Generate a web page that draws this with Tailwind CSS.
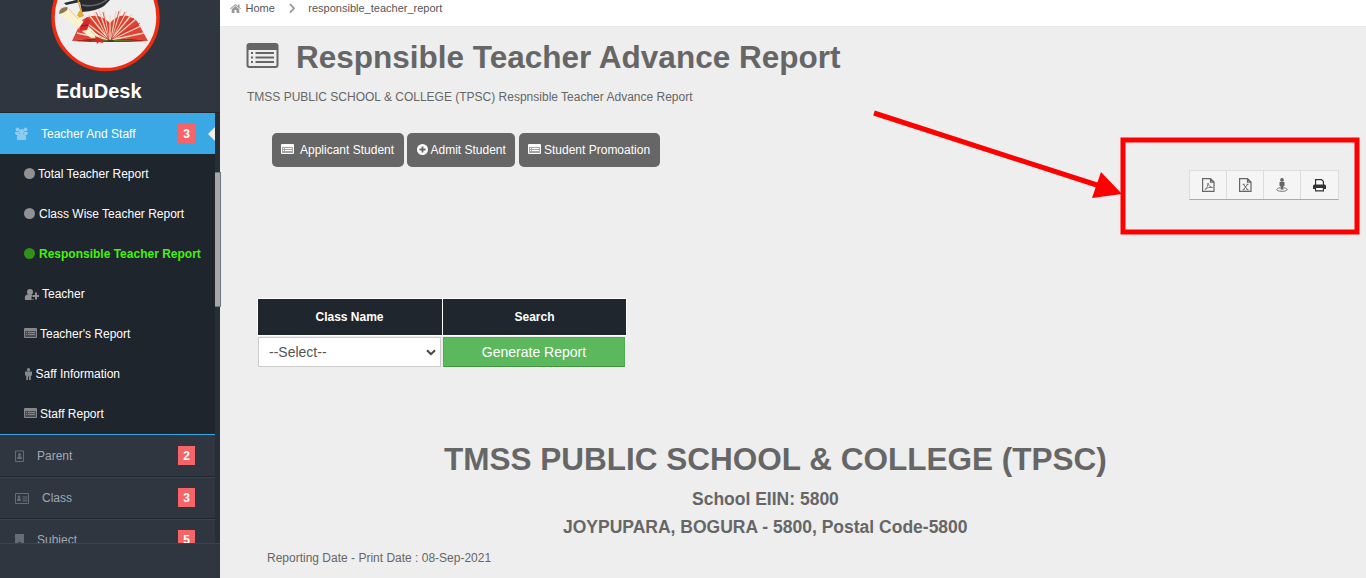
<!DOCTYPE html>
<html lang="en">
<head>
<meta charset="utf-8">
<title>EduDesk</title>
<script src="https://cdn.jsdelivr.net/npm/@tailwindcss/browser@4"></script>
</head>
<body class="relative flex h-[578px] w-[1366px] overflow-hidden bg-[#eeeeee] font-['Liberation_Sans',Arial,sans-serif] text-xs text-[#666] whitespace-nowrap">
<svg class="hidden">
  <symbol id="list" viewBox="0 0 32 25"><path fill="currentColor" fill-rule="evenodd" d="M3 0h26a3 3 0 0 1 3 3v19a3 3 0 0 1-3 3H3a3 3 0 0 1-3-3V3a3 3 0 0 1 3-3zM2 7v15q0 1 1 1h26q1 0 1-1V7zM4.500 9h2v2h-2zM9 9h18.500v2H9zM4.500 13.500h2v2h-2zM9 13.500h18.500v2H9zM4.500 18h2v2h-2zM9 18h18.500v2H9z"/></symbol>
  <symbol id="list-sm" viewBox="0 0 13 10"><path fill="currentColor" fill-rule="evenodd" d="M1 0h11a1 1 0 0 1 1 1v8a1 1 0 0 1-1 1H1a1 1 0 0 1-1-1V1a1 1 0 0 1 1-1zM1 3v6h11V3z"/><path fill="currentColor" d="M2 4h1v1H2zM4 4h7v1H4zM2 6h1v1H2zM4 6h7v1H4z"/><path fill="currentColor" opacity=".4" d="M1 3h11v6H1z"/></symbol>
  <symbol id="file" viewBox="0 0 13 14"><path fill="none" stroke="currentColor" stroke-width="1.200" d="M.6.600h7.900l3.500 3.500v9.300H.6zM8.500.600v3.500h3.500"/></symbol>
</svg>

<aside class="flex h-full w-[220px] shrink-0 flex-col bg-[#2f363f] text-white">
  <div class="relative h-[112px] overflow-hidden">
    <svg class="absolute left-[50px] top-0" width="112" height="72" viewBox="50 0 112 72">
      <circle cx="105.500" cy="17" r="52.500" fill="#eeeeef" stroke="#ee2c12" stroke-width="3.500"/>
      <path d="M72 41L82 20Q97 10 110 23Q122 9 137 21L148 41Q128 37 112 40H108Q91 37 72 41z" fill="#dc4437"/>
      <path d="M109 40L77 33M109 40L79 27M109 40L84 21M109 40L89 15M109 40L94 12M109 40L99 10M109 40L104 11M110 40L110 15M111 40L116 11M111 40L121 9M111 40L127 11M111 40L132 14M111 40L136 19M111 40L141 26M111 40L144 33" stroke="#f7d3b5" stroke-width="1.300"/>
      <path d="M109 40L81 24M109 40L87 18M109 40L96 12M109 40L103 12M111 40L119 11M111 40L125 12M111 40L134 18M111 40L140 23" stroke="#c52d29" stroke-width=".7"/>
      <path d="M72 41Q93 37 110 40.500Q128 37 148 41L128 42H91z" fill="#a4241c"/><path d="M91 41.200L107 40.500M114 40.500L133 41" stroke="#5d7b22"/><path d="M108 40h5v2h-5z" fill="#3c432d"/>
      <path d="M64 3L76 0H110L104 6Q97 11 82 12L80 2L66 5z" fill="#292a2e"/><path d="M82 5Q95 8 107 0" fill="none" stroke="#66686c" stroke-width="1.500"/>
      <path d="M78 0L81 11" stroke="#daa426" stroke-width="1.300"/><path d="M79 11l3 0 2 5-5 2-2-2z" fill="#e5aa31"/>
      <path d="M60 14L69 8L100 37L91 38z" fill="#fbf3cf"/><path d="M69 9L78 19M91 31L100 41" stroke="#dccb99"/>
      <path d="M59 14Q59 7 67 7Q69 8 66 11Q62 14 59 14z" fill="#8f7850"/>
      <path d="M79 28L87 17L90 22L87 30L81 31zM95 36L102 39L103 43L99 42L97 44z" fill="#d9252b"/>
      <path d="M81 26l7-1" stroke="#86191f"/>
    </svg>
    <h2 class="absolute left-[56px] top-[79px] text-[20px] leading-6 font-bold">EduDesk</h2>
  </div>
  <div class="flex h-[431px] overflow-hidden border-t border-[#1f252b]">
    <nav class="w-[215px] shrink-0">
      <div class="relative flex h-[41px] items-center bg-[#3aa8e4] pl-[15px]">
        <svg width="13" height="13" viewBox="0 0 13 13" fill="#8dccef"><circle cx="2.500" cy="2.500" r="1.900"/><circle cx="10.500" cy="2.500" r="1.900"/><path d="M0 5h4v3H1.200Q0 8 0 5zM9 5h4q0 3-1.200 3H9z"/><circle cx="6.500" cy="4.500" r="2.600"/><path d="M1.800 12q0-5 2.700-5h4q2.700 0 2.700 5 0 1-1.200 1H3q-1.200 0-1.200-1z"/></svg>
        <span class="ml-[13px]">Teacher And Staff</span>
        <span class="absolute left-[178px] top-[11px] h-[19px] w-[17px] bg-[#f56568] text-center font-bold leading-[20px]">3</span>
        <svg class="absolute right-0 top-[14px]" width="7" height="14"><path d="M7 0L0 7L7 14z" fill="#eee"/></svg>
      </div>
      <ul class="h-[281px] border-b border-[#3aa8e4] bg-[#1f252c] pl-6 text-white">
        <li class="flex h-10 items-center"><i class="mr-[3px] size-[11px] -translate-y-px rounded-full bg-[#8f9195]"></i><span>Total Teacher Report</span></li>
        <li class="flex h-10 items-center"><i class="mr-[4px] size-[11px] -translate-y-px rounded-full bg-[#8f9195]"></i><span>Class Wise Teacher Report</span></li>
        <li class="flex h-10 items-center font-bold text-[#47f00b]"><i class="mr-[4px] size-[11px] -translate-y-px rounded-full bg-[#2f911b]"></i><span>Responsible Teacher Report</span></li>
        <li class="flex h-10 items-center"><svg class="mr-[3px]" width="15" height="11" viewBox="0 0 15 11" fill="#8f9195"><circle cx="6" cy="3" r="3"/><path d="M1 11Q0 5.500 4 5.500h4v2H7.500v3H10V11zM11 3.500h2v2.500h2v2h-2v2.500h-2V8H8.500V6H11z"/></svg><span>Teacher</span></li>
        <li class="flex h-10 items-center"><svg class="mr-[3px] -translate-y-px text-[#85888c]" width="13" height="10"><use href="#list-sm"/></svg><span>Teacher's Report</span></li>
        <li class="flex h-10 items-center"><svg class="mr-[2.500px]" width="9" height="12" viewBox="0 0 9 12" fill="#85888c"><circle cx="4.500" cy="1.700" r="1.700"/><path d="M1 3.500h7v4H6.800V12H5V8.500H4V12H2.200V7.500H1z"/></svg><span>Saff Information</span></li>
        <li class="flex h-10 items-center"><svg class="mr-[3px] -translate-y-px text-[#85888c]" width="13" height="10"><use href="#list-sm"/></svg><span>Staff Report</span></li>
      </ul>
      <div class="relative flex h-[42px] items-center border-b border-[#20262d] pl-[15px] text-[#a0a8b4]">
        <svg width="9" height="12" viewBox="0 0 9 12"><path d="M.5 1h8v10.500h-8z" fill="none" stroke="#656c76"/><circle cx="4.500" cy="4.500" r="1.500" fill="#656c76"/><path d="M2 9q0-3 2.500-3T7 9z" fill="#656c76"/></svg>
        <span class="ml-[13px]">Parent</span>
        <span class="absolute left-[178px] top-[11px] h-[19px] w-[17px] bg-[#f56568] text-center font-bold leading-[20px] text-white">2</span>
      </div>
      <div class="relative flex h-[42px] items-center border-t border-b border-t-[#3a424c] border-b-[#20262d] pl-[15px] text-[#a0a8b4]">
        <svg width="14" height="11" viewBox="0 0 14 11"><path d="M.5.5h13v10H.5zM7.500 4h5M7.500 6h5M7.500 8h5" fill="none" stroke="#656c76"/><circle cx="4" cy="4" r="1.400" fill="#656c76"/><path d="M2 8q0-3 2-3t2 3z" fill="#656c76"/></svg>
        <span class="ml-[13px]">Class</span>
        <span class="absolute left-[178px] top-[10px] h-[19px] w-[17px] bg-[#f56568] text-center font-bold leading-[20px] text-white">3</span>
      </div>
      <div class="relative flex h-[40px] items-center border-t border-[#3a424c] pl-[15px] text-[#a0a8b4]">
        <svg width="9" height="11" viewBox="0 0 9 11" fill="#656c76"><path d="M0 0h9v11L4.500 7.500L0 11z"/></svg>
        <span class="ml-[13px]">Subject</span>
        <span class="absolute left-[178px] top-[10px] h-[19px] w-[17px] bg-[#f56568] text-center font-bold leading-[20px] text-white">5</span>
      </div>
    </nav>
    <div class="w-[5px] bg-[#282e36]"></div>
  </div>
  <div class="h-[35px] border-t border-[#3c444d]"></div>
</aside>
<div class="absolute left-[215px] top-[172px] h-[135px] w-[6px] border border-l-0 border-[#6d7885] bg-[#aaa6a6]"></div>

<main class="w-[1146px]">
  <div class="flex h-[27px] border-b border-[#e4e9eb] bg-white pl-[10px] text-[11px] leading-[16px] text-[#555]">
    <svg class="mt-[4px]" width="11" height="9" viewBox="0 0 11 9" fill="#999"><path d="M5.500 0L8 2V.5h1.500v2.800L11 4.500l-.6.7-4.900-4-4.900 4L0 4.500z"/><path d="M1.700 5.200L5.500 2l3.800 3.200V9H6.500V6h-2v3H1.700z"/></svg>
    <span class="ml-[4.500px]">Home</span>
    <svg class="ml-[14.500px] mt-[3px]" width="7" height="11" viewBox="0 0 7 11"><path d="M1 1l4 4.300-4 4.300" fill="none" stroke="#999" stroke-width="1.800"/></svg>
    <span class="ml-[12px]">responsible_teacher_report</span>
  </div>
  <div class="flex h-[60px] items-center pl-[26px]">
    <svg class="-mt-[3px] mr-[17px]" width="33" height="25"><use href="#list"/></svg>
    <h1 class="text-[31.500px] font-bold leading-[36px]">Respnsible Teacher Advance Report</h1>
  </div>
  <p class="pl-[27px] pt-[2px] leading-4">TMSS PUBLIC SCHOOL &amp; COLLEGE (TPSC) Respnsible Teacher Advance Report</p>
  <div class="mt-[28px] flex gap-[3px] pl-[52px] text-white">
    <button class="flex h-[34px] w-[132px] items-center rounded-[5px] bg-[#666] pl-[9px]"><svg class="mr-[6px] shrink-0 -translate-y-px" width="13" height="10"><use href="#list-sm"/></svg>Applicant Student</button>
    <button class="flex h-[34px] w-[108px] items-center rounded-[5px] bg-[#666] pl-[10px]"><svg class="mr-[2.500px] shrink-0 -translate-y-px" width="11" height="11"><circle cx="5.500" cy="5.500" r="5.500" fill="#fff"/><path d="M5.500 2.500v6M2.500 5.500h6" stroke="#666" stroke-width="1.800"/></svg>Admit Student</button>
    <button class="ml-[1px] flex h-[34px] w-[141px] items-center rounded-[5px] bg-[#666] pl-[9px]"><svg class="mr-[3px] shrink-0 -translate-y-px" width="13" height="10"><use href="#list-sm"/></svg>Student Promoation</button>
  </div>
  <div class="mt-[3px] flex justify-end pr-[27px]">
    <div class="flex h-[30px] w-[150px] border border-[#ddd] border-b-[#aaa] bg-[#f5f5f5]">
      <div class="flex w-[37px] items-center justify-center border-r border-[#ddd]"><svg class="ml-px" width="13" height="14"><use href="#file"/><path d="M3 11.500Q6 9.500 6 5Q6.500 9 10.500 9.500Q6 8.500 3 11.500z" fill="none" stroke="#777" stroke-width=".9"/></svg></div>
      <div class="flex w-[37px] items-center justify-center border-r border-[#ddd]"><svg class="ml-px" width="13" height="14"><use href="#file"/><path d="M4.500 6.500l4 5M8.500 6.500l-4 5M3.700 6.300h2M7.500 6.300h2M3.700 11.700h2M7.500 11.700h2" stroke="#666"/></svg></div>
      <div class="flex w-[37px] items-center justify-center border-r border-[#ddd]"><svg width="12" height="14" fill="#666"><circle cx="6" cy="1.900" r="1.900"/><path d="M3.500 4h5v4H7.500v3.500h-3V8h-1z"/><path d="M4 9.800C-1 10.500 0 13.300 6 13.300S13 10.500 8 9.800" fill="none" stroke="#777"/></svg></div>
      <div class="flex flex-1 items-center justify-center"><svg width="13" height="13" fill="#333"><path d="M2.600 6V.6h6L10.400 2.500V6" fill="#fff" stroke="#333" stroke-width="1.200"/><path d="M0 7q0-1.500 1.500-1.500h10Q13 5.500 13 7v3h-2.500V8.500h-8V10H0z"/><path d="M2.600 8.500h7.800v3.300H2.600z" fill="#fff" stroke="#333" stroke-width="1.200"/></svg></div>
    </div>
  </div>
  <div class="ml-[37px] mt-[98px] w-[370px]">
    <div class="flex h-[38px] gap-px border border-white bg-white text-center font-bold leading-[36px] text-white">
      <div class="w-[184px] bg-[#1f262e] pr-px">Class Name</div><div class="flex-1 bg-[#1f262e]">Search</div>
    </div>
    <div class="mt-px flex gap-[2px] pl-[1px] text-sm">
      <div class="flex h-[30px] w-[183px] items-center justify-between border border-[#ccc] bg-white pl-[10px] pr-[4px] text-[#555]">--Select--<svg width="10" height="7"><path d="M1 1.200l4 4 4-4" fill="none" stroke="#444" stroke-width="2"/></svg></div>
      <button class="h-[30px] w-[182px] border border-[#4cae4c] border-b-[#429642] bg-[#5cb85c] leading-[28px] text-white">Generate Report</button>
    </div>
  </div>
  <section class="mt-[70px] font-bold">
    <h2 class="pl-[224px] text-[31.500px] leading-[44px]">TMSS PUBLIC SCHOOL &amp; COLLEGE (TPSC)</h2>
    <p class="mt-[4px] pl-[472px] text-[17.500px] leading-[28px]">School EIIN: 5800</p>
    <p class="pl-[343px] text-[17.500px] leading-[28px]">JOYPUPARA, BOGURA - 5800, Postal Code-5800</p>
  </section>
  <p class="mt-[9px] pl-[47px] leading-4">Reporting Date - Print Date : 08-Sep-2021</p>
</main>

<svg class="pointer-events-none absolute left-[870px] top-[105px]" width="496" height="135" viewBox="870 105 496 135">
  <rect x="1123" y="140" width="234" height="92" fill="none" stroke="red" stroke-width="5"/>
  <path d="M874 113L1100 186" stroke="red" stroke-width="5"/>
  <path d="M1101 172L1122 194L1092 198z" fill="red"/>
</svg>
</body>
</html>
